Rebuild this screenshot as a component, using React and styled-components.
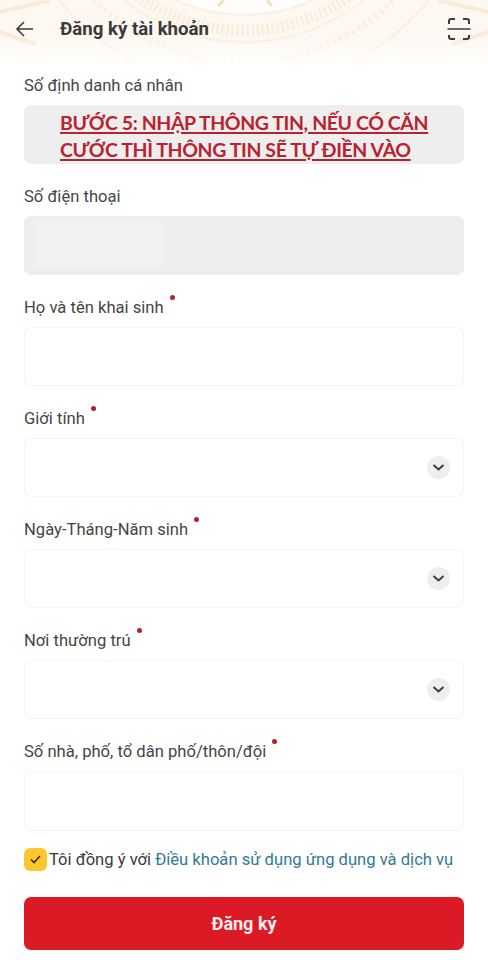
import React from "react";
import styled, { createGlobalStyle } from "styled-components";

const Global = createGlobalStyle`
  html, body { margin: 0; padding: 0; background: #fff; }
  * { box-sizing: border-box; }
  body { font-family: Roboto, "Noto Sans", sans-serif; }
`;

const Page = styled.div`
  position: relative;
  width: 488px;
  height: 960px;
  overflow: hidden;
  background: #fff;
`;

const HeaderArt = styled.svg`
  position: absolute;
  left: 0;
  top: 0;
  width: 488px;
  height: 70px;
`;

const Header = styled.header`
  position: relative;
  height: 58px;
  padding: 0 17px 0 15px;
  display: flex;
  align-items: center;
`;

const IconButton = styled.span`
  display: flex;
  flex: none;
`;

const Title = styled.h1`
  margin: 0 0 0 25px;
  flex: 1;
  font-size: 18.6px;
  font-weight: 700;
  color: #3a3a3a;
`;

const Form = styled.main`
  position: relative;
  padding: 17px 24px 0;
  display: flex;
  flex-direction: column;
`;

const Field = styled.section`
  margin-bottom: 22px;
`;

const Label = styled.div`
  display: flex;
  height: 20px;
  margin-bottom: 10px;
  align-items: center;
  font-size: 16.6px;
  color: #454545;
`;

const Required = styled.i`
  width: 5px;
  height: 5px;
  margin: -19px 0 0 6px;
  border-radius: 50%;
  background: #b3202c;
`;

const Box = styled.div`
  position: relative;
  height: ${(p) => (p.$tall ? "60px" : "59px")};
  border-radius: 7px;
  display: flex;
  align-items: center;
  justify-content: flex-end;
  padding-right: 13px;
  background: ${(p) => (p.$disabled ? "#eeeeee" : "#fff")};
  border: 1px solid ${(p) => (p.$disabled ? "#eeeeee" : "#f4f4f4")};
`;

const Notice = styled.div`
  width: 100%;
  height: 100%;
  padding: 3px 0 0 35px;
  font-family: Lato, "Open Sans", sans-serif;
  font-size: 19.5px;
  font-weight: 700;
  letter-spacing: -0.4px;
  line-height: 27px;
  color: #b8232f;
  text-decoration: underline;
  text-decoration-thickness: 2px;
  text-underline-offset: 2px;
  white-space: nowrap;
`;

const Mask = styled.div`
  position: absolute;
  left: 9px;
  top: 4px;
  width: 128px;
  height: 48px;
  background: #f1f1f1;
`;

const Chevron = styled.span`
  width: 23px;
  height: 23px;
  border-radius: 50%;
  background: #eeeeee;
  display: flex;
  align-items: center;
  justify-content: center;
`;

const Agreement = styled.div`
  display: flex;
  align-items: center;
  height: 24px;
  margin-top: -6px;
  font-size: 16.6px;
  color: #3a3a3a;
  white-space: nowrap;
`;

const Check = styled.span`
  flex: none;
  width: 23px;
  height: 23px;
  margin-right: 2px;
  border-radius: 6px;
  background: #fcc62d;
  display: flex;
  align-items: center;
  justify-content: center;
`;

const TermsLink = styled.span`
  margin-left: 4px;
  color: #2f7a94;
`;

const Submit = styled.button`
  height: 53px;
  margin-top: 26px;
  border: 0;
  border-radius: 7px;
  background: #dc1a25;
  color: #fbeeee;
  font-family: inherit;
  font-size: 18px;
  font-weight: 700;
`;

const Art = () => {
  const ticks = [];
  const cx = 244;
  const cy = -150;
  for (let a = 20; a <= 160; a += 1.6) {
    const r = (a * Math.PI) / 180;
    const c = Math.cos(r);
    const s = Math.sin(r);
    ticks.push(
      <line key={a} x1={cx + c * 175} y1={cy + s * 175} x2={cx + c * 186} y2={cy + s * 186} stroke="#f9eddc" strokeWidth="2.5" />
    );
  }
  return (
    <HeaderArt viewBox="0 0 488 70" aria-hidden="true">
      <defs>
        <linearGradient id="fade" x1="0" y1="0" x2="0" y2="1">
          <stop offset="0" stopColor="#fff" />
          <stop offset="0.55" stopColor="#fff" />
          <stop offset="0.95" stopColor="#000" />
        </linearGradient>
        <mask id="m">
          <rect width="488" height="70" fill="url(#fade)" />
        </mask>
      </defs>
      <g mask="url(#m)" fill="none">
        <rect width="488" height="70" fill="#fdf8f1" />
        <circle cx={cx} cy={cy} r="165" fill="#fffdfb" stroke="#faf0e2" strokeWidth="2" />
        <circle cx={cx} cy={cy} r="192" stroke="#faf0e2" strokeWidth="2" />
        <circle cx={cx} cy={cy} r="212" stroke="#faf0e2" strokeWidth="6" strokeDasharray="3 4" />
        <circle cx={cx} cy={cy} r="238" stroke="#faf0e2" strokeWidth="2" />
        {ticks}
        <path d="M218 6l6-6M272 6l-5-6" stroke="#f5dfc2" strokeWidth="3" />
        <path d="M0 12L50 0M488 12L438 0M0 32L36 44M488 32L452 44" stroke="#f9ebd8" strokeWidth="4" />
      </g>
    </HeaderArt>
  );
};

const ChevronIcon = () => (
  <svg width="13" height="9" viewBox="0 0 13 9" fill="none">
    <path d="M1.500 2 6.500 6.500 11.500 2" stroke="#3d3d3d" strokeWidth="2" />
  </svg>
);

const SelectField = ({ label }) => (
  <Field>
    <Label>{label}<Required /></Label>
    <Box><Chevron><ChevronIcon /></Chevron></Box>
  </Field>
);

export default function App() {
  return (
    <Page>
      <Global />
      <Art />
      <Header>
        <IconButton>
          <svg width="20" height="18" viewBox="0 0 20 18" fill="none">
            <path d="M18 9H2M9 2 2 9l7 7" stroke="#3b3b3b" strokeWidth="1.600" />
          </svg>
        </IconButton>
        <Title>Đăng ký tài khoản</Title>
        <IconButton>
          <svg width="24" height="24" viewBox="0 0 24 24" fill="none">
            <path d="M2 7V4a2 2 0 0 1 2-2h4M16 2h4a2 2 0 0 1 2 2v3M2 18v2a2 2 0 0 0 2 2h4M16 22h4a2 2 0 0 0 2-2v-2" stroke="#3b3b3b" strokeWidth="2" />
            <path d="M0.500 12H23.500" stroke="#3b3b3b" strokeWidth="1.500" />
          </svg>
        </IconButton>
      </Header>
      <Form>
        <Field>
          <Label>Số định danh cá nhân</Label>
          <Box $disabled>
            <Notice>
              BƯỚC 5: NHẬP THÔNG TIN, NẾU CÓ CĂN<br />CƯỚC THÌ THÔNG TIN SẼ TỰ ĐIỀN VÀO
            </Notice>
          </Box>
        </Field>
        <Field>
          <Label>Số điện thoại</Label>
          <Box $disabled><Mask /></Box>
        </Field>
        <Field>
          <Label>Họ và tên khai sinh<Required /></Label>
          <Box />
        </Field>
        <SelectField label="Giới tính" />
        <SelectField label="Ngày-Tháng-Năm sinh" />
        <SelectField label="Nơi thường trú" />
        <Field>
          <Label>Số nhà, phố, tổ dân phố/thôn/đội<Required /></Label>
          <Box $tall />
        </Field>
        <Agreement>
          <Check>
            <svg width="13" height="11" viewBox="0 0 13 11" fill="none">
              <path d="M2 5.500 5 8.500 11 2" stroke="#3a2a10" strokeWidth="1.600" />
            </svg>
          </Check>
          Tôi đồng ý với<TermsLink>Điều khoản sử dụng ứng dụng và dịch vụ</TermsLink>
        </Agreement>
        <Submit type="button">Đăng ký</Submit>
      </Form>
    </Page>
  );
}
